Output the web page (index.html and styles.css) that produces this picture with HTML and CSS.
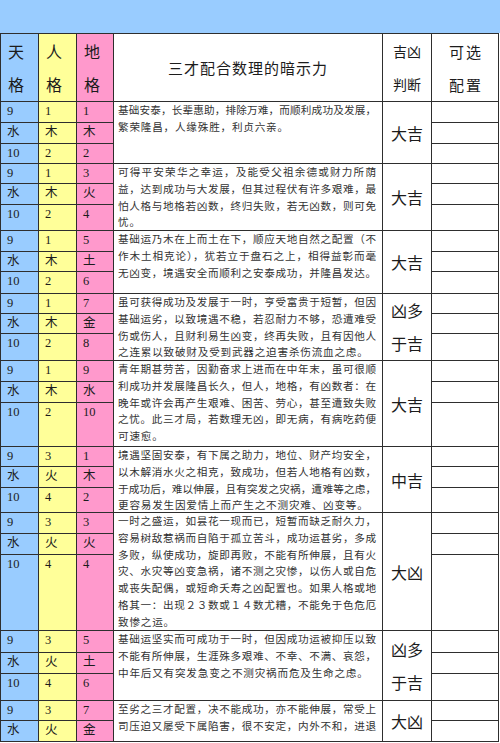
FILE: index.html
```html
<!DOCTYPE html>
<html lang="zh-CN">
<head>
<meta charset="utf-8">
<title>三才配合数理的暗示力</title>
<link rel="stylesheet" href="styles.css">
</head>
<body>
<div class="band"></div>
<div class="sheet">
  <div class="hd c1">天<br>格</div>
  <div class="hd c2">人<br>格</div>
  <div class="hd c3">地<br>格</div>
  <div class="title">三才配合数理的暗示力</div>
  <div class="hc">吉凶<br>判断</div>
  <div class="hc wide">可选<br>配置</div>

  <div class="n c1">9</div><div class="n c2">1</div><div class="n c3">1</div>
  <div class="txt"><p class="fl">基础安泰，长辈惠助，排除万难，而顺利成功及发展，</p><p class="ll">繁荣隆昌，人缘殊胜，利贞六亲。</p></div>
  <div class="res">大吉</div><div class="opt"></div>
  <div class="n c1">水</div><div class="n c2">木</div><div class="n c3">木</div><div class="opt"></div>
  <div class="n c1">10</div><div class="n c2">2</div><div class="n c3">2</div><div class="opt"></div>

  <div class="n c1">9</div><div class="n c2">1</div><div class="n c3">3</div>
  <div class="txt"><p class="fl">可得平安荣华之幸运，及能受父祖余德或财力所荫</p><p class="fl">益，达到成功与大发展，但其过程伏有许多艰难，最</p><p class="fl">怕人格与地格若凶数，终归失败，若无凶数，则可免</p><p class="ll">忧。</p></div>
  <div class="res">大吉</div><div class="opt"></div>
  <div class="n c1">水</div><div class="n c2">木</div><div class="n c3">火</div><div class="opt"></div>
  <div class="n c1">10</div><div class="n c2">2</div><div class="n c3">4</div><div class="opt"></div>

  <div class="n c1">9</div><div class="n c2">1</div><div class="n c3">5</div>
  <div class="txt"><p class="fl">基础运乃木在上而土在下，顺应天地自然之配置（不</p><p class="fl">作木土相克论），犹若立于盘石之上，相得益彰而毫</p><p class="fl">无凶变，境遇安全而顺利之安泰成功，并隆昌发达。</p></div>
  <div class="res">大吉</div><div class="opt"></div>
  <div class="n c1">水</div><div class="n c2">木</div><div class="n c3">土</div><div class="opt"></div>
  <div class="n c1">10</div><div class="n c2">2</div><div class="n c3">6</div><div class="opt"></div>

  <div class="n c1">9</div><div class="n c2">1</div><div class="n c3">7</div>
  <div class="txt"><p class="fl">虽可获得成功及发展于一时，亨受富贵于短暂，但因</p><p class="fl">基础运劣，以致境遇不稳，若忍耐力不够，恐遭难受</p><p class="fl">伤或伤人，且财利易生凶变，终再失败，且有因他人</p><p class="ll">之连累以致破财及受到武器之迫害杀伤流血之虑。</p></div>
  <div class="res two">凶多<br>于吉</div><div class="opt"></div>
  <div class="n c1">水</div><div class="n c2">木</div><div class="n c3">金</div><div class="opt"></div>
  <div class="n c1">10</div><div class="n c2">2</div><div class="n c3">8</div><div class="opt"></div>

  <div class="n c1">9</div><div class="n c2">1</div><div class="n c3">9</div>
  <div class="txt"><p class="fl">青年期甚劳苦，因勤奋求上进而在中年末，虽可很顺</p><p class="fl">利成功并发展隆昌长久，但人，地格，有凶数者：在</p><p class="fl">晚年或许会再产生艰难、困苦、劳心，甚至遭致失败</p><p class="fl">之忧。此三才局，若数理无凶，即无病，有病吃药便</p><p class="ll">可速愈。</p></div>
  <div class="res">大吉</div><div class="opt"></div>
  <div class="n c1">水</div><div class="n c2">木</div><div class="n c3">水</div><div class="opt"></div>
  <div class="n c1">10</div><div class="n c2">2</div><div class="n c3">10</div><div class="opt"></div>

  <div class="n c1">9</div><div class="n c2">3</div><div class="n c3">1</div>
  <div class="txt"><p class="fl">境遇坚固安泰，有下属之助力，地位、财产均安全，</p><p class="fl">以木解消水火之相克，致成功，但若人地格有凶数，</p><p class="fl">于成功后，难以伸展，且有突发之灾祸，遭难等之虑，</p><p class="ll">更容易发生因爱情上而产生之不测灾难、凶变等。</p></div>
  <div class="res">中吉</div><div class="opt"></div>
  <div class="n c1">水</div><div class="n c2">火</div><div class="n c3">木</div><div class="opt"></div>
  <div class="n c1">10</div><div class="n c2">4</div><div class="n c3">2</div><div class="opt"></div>

  <div class="n c1">9</div><div class="n c2">3</div><div class="n c3">3</div>
  <div class="txt"><p class="fl">一时之盛运，如昙花一现而已，短暂而缺乏耐久力，</p><p class="fl">容易树敌惹祸而自陷于孤立苦斗，成功运甚劣，多成</p><p class="fl">多败，纵使成功，旋即再败，不能有所伸展，且有火</p><p class="fl">灾、水灾等凶变急祸，诸不测之灾惨，以伤人或自危</p><p class="fl">或丧失配偶，或短命夭寿之凶配置也。如果人格或地</p><p class="fl">格其一：出现２３数或１４数尤糟，不能免于色危厄</p><p class="ll">致惨之运。</p></div>
  <div class="res">大凶</div><div class="opt"></div>
  <div class="n c1">水</div><div class="n c2">火</div><div class="n c3">火</div><div class="opt"></div>
  <div class="n c1">10</div><div class="n c2">4</div><div class="n c3">4</div><div class="opt"></div>

  <div class="n c1">9</div><div class="n c2">3</div><div class="n c3">5</div>
  <div class="txt"><p class="fl">基础运坚实而可成功于一时，但因成功运被抑压以致</p><p class="fl">不能有所伸展，生涯殊多艰难、不幸、不满、哀怨，</p><p class="ll">中年后又有突发急变之不测灾祸而危及生命之虑。</p></div>
  <div class="res two">凶多<br>于吉</div><div class="opt"></div>
  <div class="n c1">水</div><div class="n c2">火</div><div class="n c3">土</div><div class="opt"></div>
  <div class="n c1">10</div><div class="n c2">4</div><div class="n c3">6</div><div class="opt"></div>

  <div class="n c1">9</div><div class="n c2">3</div><div class="n c3">7</div>
  <div class="txt short"><p class="fl">至劣之三才配置，决不能成功，亦不能伸展，常受上</p><p class="fl">司压迫又屡受下属陷害，很不安定，内外不和，进退</p></div>
  <div class="res short">大凶</div><div class="opt"></div>
  <div class="n c1">水</div><div class="n c2">火</div><div class="n c3">金</div><div class="opt"></div>
</div>
</body>
</html>
```

FILE: styles.css
```css
* {
  box-sizing: border-box;
}

body {
  margin: 0;
  background: #ffffff;
  color: #1c1c1c;
  font-family: "Liberation Serif", "Noto Sans CJK SC", serif;
}

.band {
  height: 33px;
  background: #99ccff;
}

.sheet {
  display: grid;
  width: 499px;
  grid-template-columns: 37px 37px 36px 268px 48px 66px;
  grid-template-rows:
    67px
    20px 20px 19px
    19px 20px 25px
    20px 19px 21px
    19px 19px 26px
    20px 20px 43px
    19px 20px 24px
    20px 20px 75px
    21px 20px 26px
    19px 20px;
  gap: 1px;
  background: #2e2e2e;
  border: 1px solid #2e2e2e;
}

.sheet > div {
  background: #ffffff;
}

.sheet > .c1 {
  background: #99ccff;
}

.sheet > .c2 {
  background: #ffff99;
}

.sheet > .c3 {
  background: #ff99cc;
}

.hd {
  font-family: "Noto Sans CJK SC", sans-serif;
  font-size: 16px;
  line-height: 33px;
  padding: 1px 0 0 7px;
}

.title {
  display: flex;
  align-items: center;
  justify-content: center;
  font-family: "Noto Sans CJK SC", sans-serif;
  font-size: 15px;
  letter-spacing: 1px;
}

.hc {
  font-family: "Noto Sans CJK SC", sans-serif;
  font-size: 14px;
  line-height: 33px;
  padding-top: 1px;
  text-align: center;
}

.hc.wide {
  font-size: 15px;
  letter-spacing: 2px;
  padding-left: 2px;
}

.n {
  font-size: 12.5px;
  line-height: 18px;
  padding-left: 6px;
}

.txt {
  grid-row: span 3;
  padding: 0 6px 0 4px;
  font-family: "Noto Sans CJK SC", sans-serif;
  font-size: 10.6px;
  line-height: 16.8px;
  color: #333333;
}

.txt p {
  margin: 0;
}

.txt .fl {
  text-align: justify;
  text-align-last: justify;
}

.txt .ll {
  letter-spacing: 0.8px;
}

.res {
  grid-row: span 3;
  display: flex;
  align-items: center;
  justify-content: center;
  font-family: "Noto Sans CJK SC", sans-serif;
  font-size: 16px;
  text-align: center;
}

.res.two {
  line-height: 33px;
}

.txt.short,
.res.short {
  grid-row: span 2;
}
```
